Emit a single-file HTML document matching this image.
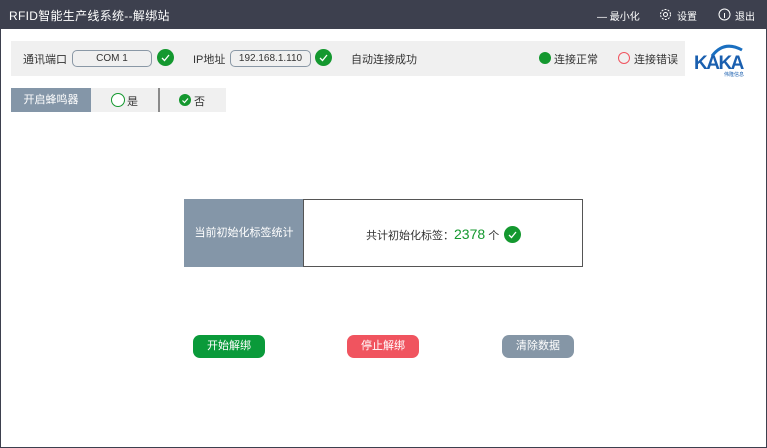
<!DOCTYPE html>
<html><head><meta charset="utf-8"><style>
*{margin:0;padding:0;box-sizing:border-box}
body{width:767px;height:448px;position:relative;background:#fff;font-family:"Liberation Sans","Noto Sans CJK SC",sans-serif;color:#333;overflow:hidden;font-size:11px}
.frame{position:absolute;left:0;top:0;width:767px;height:448px;border:1px solid #3d404e}
.title{position:absolute;left:0;top:0;width:767px;height:29px;background:#3d404e;color:#fff}
.abs{position:absolute;white-space:nowrap}
.chk{position:absolute;width:17px;height:17px;border-radius:50%;background:#14982f}
.chk svg{position:absolute;left:0;top:0}
.pill{position:absolute;height:17px;border:1px solid #8a98a6;border-radius:5px;font-size:10px;text-align:center;line-height:15px;color:#333}
.btn{position:absolute;top:335px;width:72px;height:23px;border-radius:7px;color:#fff;font-size:11px;text-align:center;line-height:23px}
</style></head><body>
<div class="frame"></div>
<div class="title">
 <div class="abs" style="left:9px;top:7px;font-size:12px;letter-spacing:0.3px">RFID智能生产线系统--解绑站</div>
 <div class="abs" style="left:597px;top:8px;font-size:10px">— 最小化</div>
 <svg class="abs" style="left:659px;top:8px" width="13" height="13" viewBox="0 0 13 13"><circle cx="6.5" cy="6.5" r="2" fill="none" stroke="#fff"/><circle cx="6.5" cy="6.5" r="5" fill="none" stroke="#fff" stroke-dasharray="2 1.2"/></svg>
 <div class="abs" style="left:677px;top:8px;font-size:10px">设置</div>
 <svg class="abs" style="left:718px;top:8px" width="13" height="13" viewBox="0 0 13 13"><circle cx="6.5" cy="6.5" r="5.5" fill="none" stroke="#fff"/><line x1="6.5" y1="5" x2="6.5" y2="10" stroke="#fff"/></svg>
 <div class="abs" style="left:735px;top:8px;font-size:10px">退出</div>
</div>
<div class="abs" style="left:11px;top:41px;width:674px;height:35px;background:#f0f0f0"></div>
<div class="abs" style="left:23px;top:51px">通讯端口</div>
<div class="pill" style="left:72px;top:50px;width:80px">COM 1</div>
<div class="chk" style="left:157px;top:49px"><svg width="17" height="17"><path d="M5 9l2.5 2.5L12 6" stroke="#fff" stroke-width="1.3" fill="none"/></svg></div>
<div class="abs" style="left:193px;top:51px">IP地址</div>
<div class="pill" style="left:230px;top:50px;width:81px">192.168.1.110</div>
<div class="chk" style="left:315px;top:49px"><svg width="17" height="17"><path d="M5 9l2.5 2.5L12 6" stroke="#fff" stroke-width="1.3" fill="none"/></svg></div>
<div class="abs" style="left:351px;top:51px">自动连接成功</div>
<div class="abs" style="left:539px;top:52px;width:12px;height:12px;border-radius:50%;background:#14982f"></div>
<div class="abs" style="left:554px;top:51px">连接正常</div>
<div class="abs" style="left:618px;top:52px;width:12px;height:12px;border-radius:50%;border:1px solid #f0545f"></div>
<div class="abs" style="left:634px;top:51px">连接错误</div>
<svg class="abs" style="left:692px;top:38px" width="56" height="40" viewBox="0 0 56 40"><path d="M20 18 Q32 2 50 12" stroke="#1a6fc0" stroke-width="3" fill="none"/><text x="2" y="31" font-family="Liberation Sans" font-weight="bold" font-size="19" fill="#1a5faf" letter-spacing="-1.5">KAKA</text><text x="32" y="38" font-size="5" fill="#1a5faf" font-family="Noto Sans CJK SC">伟隆信息</text></svg>

<div class="abs" style="left:11px;top:88px;width:80px;height:24px;background:#8496a8;color:#fff;text-align:center;line-height:24px">开启蜂鸣器</div>
<div class="abs" style="left:91px;top:88px;width:67px;height:24px;background:#f0f0f0"></div>
<div class="abs" style="left:158px;top:88px;width:2px;height:24px;background:#8a8a8a"></div>
<div class="abs" style="left:160px;top:88px;width:66px;height:24px;background:#f0f0f0"></div>
<div class="abs" style="left:111px;top:93px;width:14px;height:14px;border-radius:50%;border:1px solid #14982f;background:#fff"></div>
<div class="abs" style="left:127px;top:93px">是</div>
<div class="chk" style="left:179px;top:94px;width:12px;height:12px"><svg width="12" height="12"><path d="M3.5 6.5l2 2L9 4.5" stroke="#fff" stroke-width="1.2" fill="none"/></svg></div>
<div class="abs" style="left:194px;top:93px">否</div>

<div class="abs" style="left:184px;top:199px;width:120px;height:68px;background:#8496a8;color:#fff;text-align:center;line-height:68px">当前初始化标签统计</div>
<div class="abs" style="left:303px;top:199px;width:280px;height:68px;border:1px solid #555"></div>
<div class="abs" style="left:366px;top:226px">共计初始化标签：<span style="color:#14982f;font-size:14px">2378</span> 个</div>
<div class="chk" style="left:504px;top:226px"><svg width="17" height="17"><path d="M5 9l2.5 2.5L12 6" stroke="#fff" stroke-width="1.3" fill="none"/></svg></div>

<div class="btn" style="left:193px;background:#0a9a3a">开始解绑</div>
<div class="btn" style="left:347px;background:#f0545f">停止解绑</div>
<div class="btn" style="left:502px;background:#8596a6">清除数据</div>
</body></html>
